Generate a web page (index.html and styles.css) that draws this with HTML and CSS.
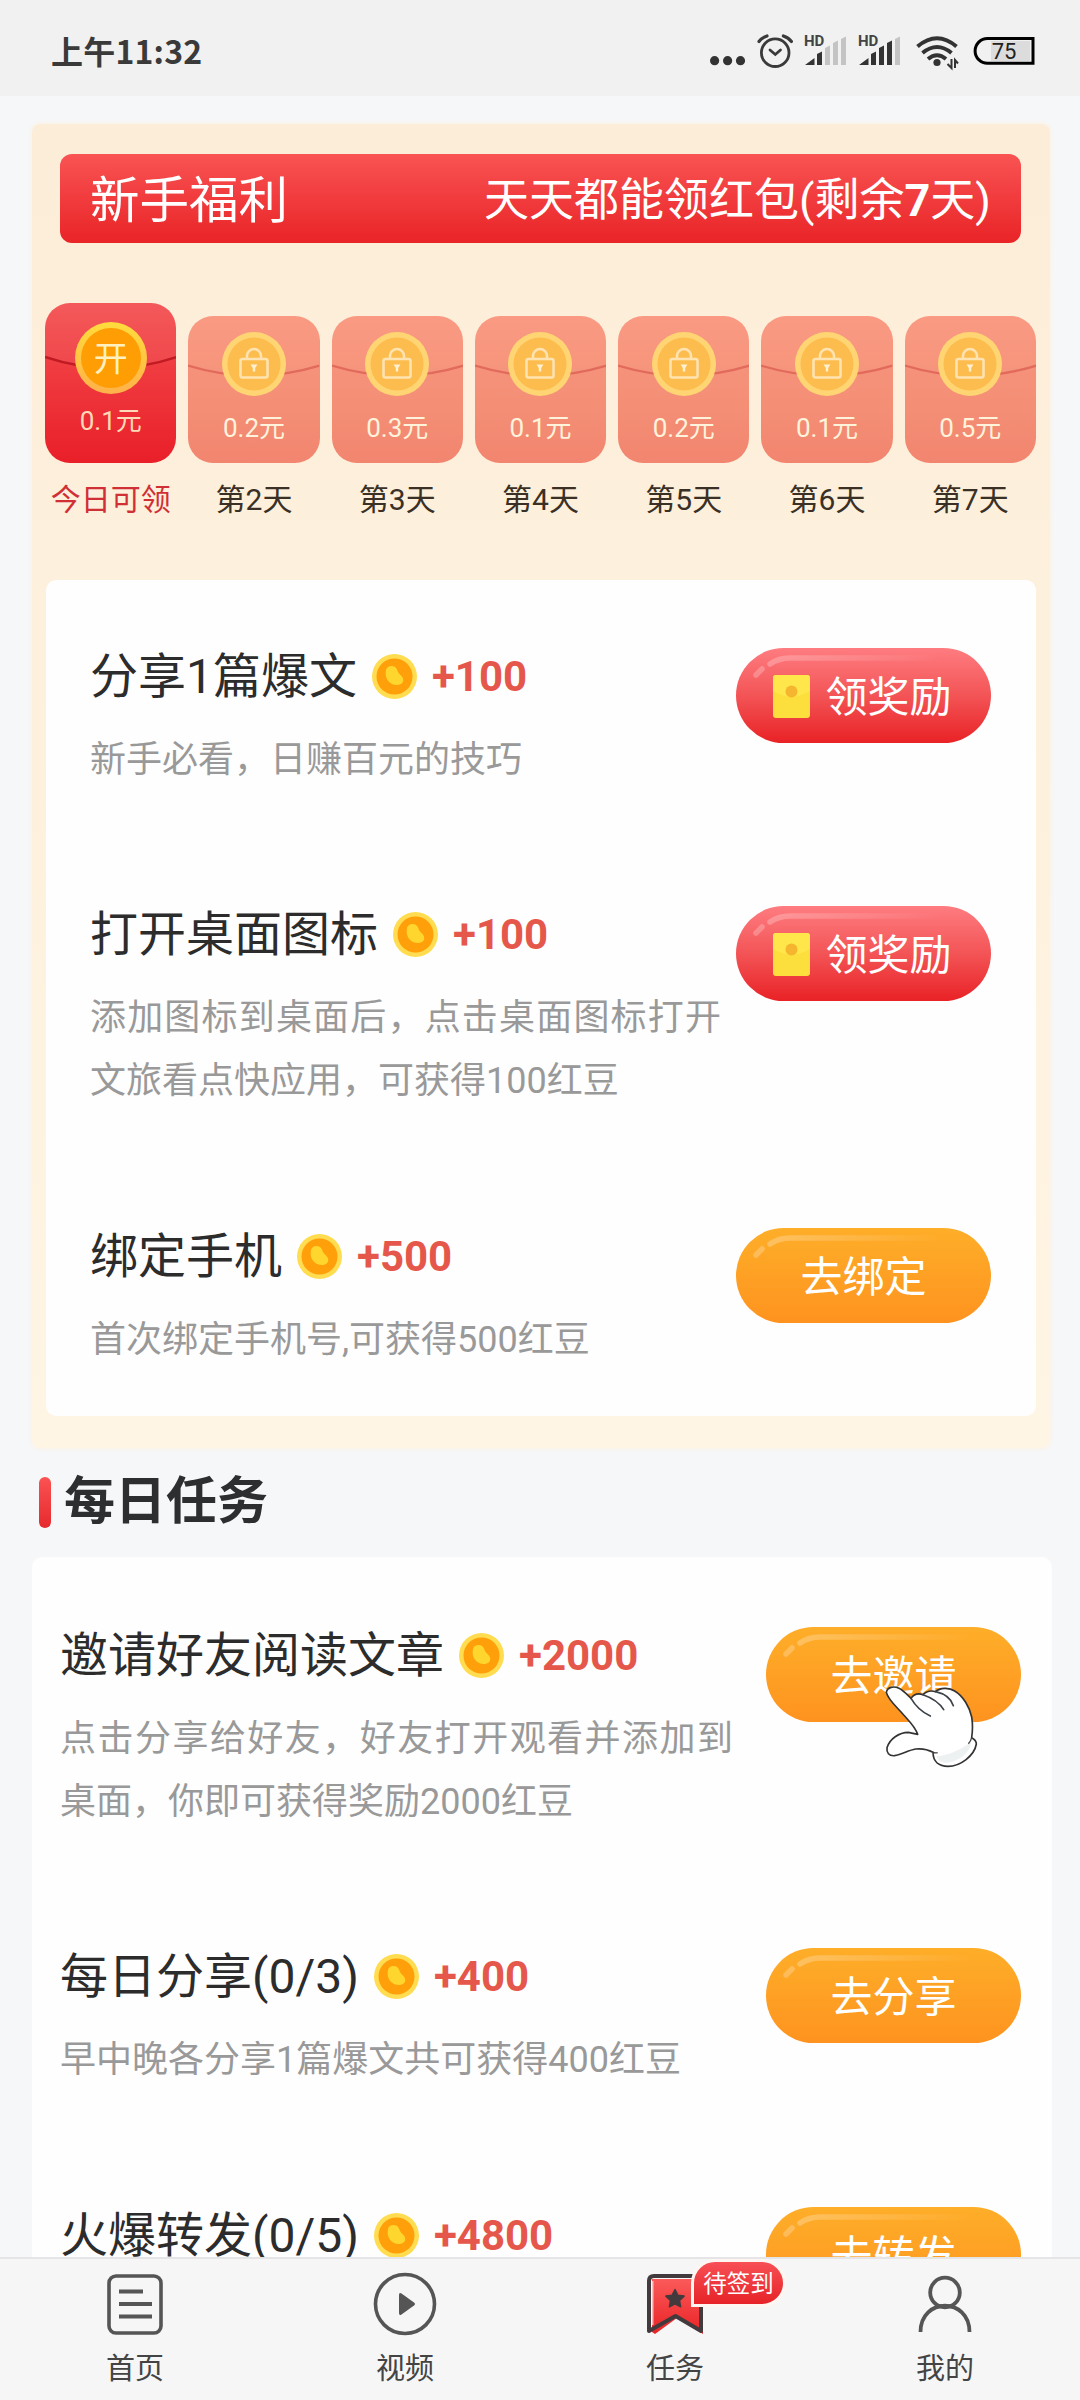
FILE: index.html
```html
<!DOCTYPE html>
<html lang="zh-CN">
<head>
<meta charset="utf-8">
<title>任务</title>
<link rel="stylesheet" href="styles.css">
</head>
<body>
<svg class="defs" width="0" height="0" aria-hidden="true">
  <defs>
    <linearGradient id="gloss-fade" x1="0" x2="1" y1="0" y2="0">
      <stop offset="0" stop-color="#fff" stop-opacity=".26"/>
      <stop offset="1" stop-color="#fff" stop-opacity="0"/>
    </linearGradient>
    <linearGradient id="ring" x1="0" x2="0" y1="0" y2="1">
      <stop offset="0" stop-color="#ffdc3c"/><stop offset="1" stop-color="#ffb14a"/>
    </linearGradient>
    <linearGradient id="ribbon" x1="0" x2="0" y1="0" y2="1">
      <stop offset="0" stop-color="#fb5a5a"/><stop offset="1" stop-color="#ea2326"/>
    </linearGradient>
    <symbol id="gloss" viewBox="0 0 255 96">
      <path d="M34 16Q43 10 54 10H205" fill="none" stroke="url(#gloss-fade)" stroke-width="5.500" stroke-linecap="round"/>
      <path d="M20 27l6-6" stroke="#fff" stroke-opacity=".24" stroke-width="5.500" stroke-linecap="round"/>
    </symbol>
    <symbol id="bean" viewBox="0 0 45 45">
      <circle cx="22.5" cy="22.5" r="22.5" fill="#ffdc50"/>
      <circle cx="22.5" cy="22.5" r="18" fill="#ff9f0a"/>
      <path d="M14 16c1-5 9-5.500 11-.5 1 3 2 4 4 6 4 4 2.500 9-3 9.500-8 .5-14-6-12-15z" fill="#ffd62e"/>
    </symbol>
    <symbol id="flap" viewBox="0 0 132 160" preserveAspectRatio="none">
      <path d="M0 0H132V53Q66 75 0 53Z" fill="#fff" fill-opacity=".06"/>
      <path d="M0 54Q66 76 132 54" fill="none" stroke="#b00f18" stroke-opacity=".75" stroke-width="2.4"/>
    </symbol>
    <symbol id="coin" viewBox="0 0 72 72">
      <circle cx="36" cy="36" r="36" fill="url(#ring)"/>
      <circle cx="36" cy="36" r="30" fill="#ff9d05"/>
    </symbol>
    <symbol id="lock" viewBox="0 0 64 64">
      <circle cx="32" cy="32" r="32" fill="#ffd573"/>
      <circle cx="32" cy="32" r="26.5" fill="#fdbc4e"/>
      <g fill="none" stroke="#ffe3b0" stroke-width="2.6">
        <rect x="18.5" y="27" width="27" height="18.5" rx="2"/>
        <path d="M25 27v-3a7 7 0 0 1 14 0v3"/>
      </g>
      <path d="M28.500 32.500h7l-2.300 3.500v3.500h-2.400v-3.500z" fill="#fff0d0"/>
    </symbol>
    <symbol id="envelope" viewBox="0 0 37 43">
      <rect width="37" height="43" rx="3" fill="#fcdf3c"/>
      <path d="M0 16Q18.500 27 37 16V3a3 3 0 0 0-3-3H3a3 3 0 0 0-3 3z" fill="#ffe64a"/>
      <circle cx="18.500" cy="16.500" r="6" fill="#f5b52f"/>
    </symbol>
  </defs>
</svg>

<header class="status">
  <span class="clock">上午11:32</span>
  <svg class="status-icons" viewBox="5 28 332 44" width="332" height="44">
    <g fill="#333"><circle cx="14.600" cy="60.700" r="4.600"/><circle cx="27.600" cy="60.700" r="4.600"/><circle cx="40.500" cy="60.700" r="4.600"/></g>
    <g fill="none" stroke="#3a3a3a" stroke-width="2.800" stroke-linecap="round">
      <circle cx="75.200" cy="52.700" r="13.800"/>
      <path d="M70 50l5.300 4.500L80.500 50"/>
      <path d="M59 41.500q3-4 8-5.500M91.400 41.500q-3-4-8-5.500" stroke-width="3.200"/>
    </g>
    <g class="hd"><text x="104" y="46">HD</text><text x="158" y="46">HD</text></g>
    <g fill="#333">
      <path d="M105 65l9.500-7v7zM117 65V54l5-2.500V65z"/>
      <path d="M159 65l9.500-7v7zM171 65V54l5-2.500V65zM179 65V48l5-2.500V65zM187 65V43l5-2.500V65z"/>
    </g>
    <g fill="#c4c4c4">
      <path d="M125 65V48l5-2.500V65zM133 65V43l5-2.500V65zM141 65V39l5-2.500V65zM195 65V39l5-2.500V65z"/>
    </g>
    <g fill="none" stroke="#333" stroke-width="4">
      <path d="M217.500 46.500Q237 30 256.500 46.500M222.500 53Q237 41 251.500 53M228 59Q237 51.500 246 59"/>
    </g>
    <circle cx="237" cy="62.500" r="3.600" fill="#333"/>
    <path d="M251.500 59v9l-4-4M255 68v-8l3 3.500" fill="none" stroke="#333" stroke-width="2"/>
    <rect x="291" y="41" width="39" height="20" fill="#dcdcdc"/>
    <path d="M333 38.500H287.500a12.300 12.300 0 0 0 0 24.800H333z" fill="none" stroke="#000" stroke-width="3"/>
    <text class="charge" x="304" y="59" text-anchor="middle">75</text>
  </svg>
</header>

<main class="page">
  <section class="newbie">
    <div class="banner">
      <h1 class="banner-title">新手福利</h1>
      <p class="banner-note">天天都能领红包(剩余<b>7</b>天)</p>
    </div>

    <ul class="days">
      <li class="day today">
        <div class="packet"><svg class="flap"><use href="#flap"/></svg><div class="coin"><svg class="coin-art"><use href="#coin"/></svg><span class="open">开</span></div><span class="sum">0.1元</span></div>
        <span class="when">今日可领</span>
      </li>
      <li class="day"><div class="packet"><svg class="flap"><use href="#flap"/></svg><svg class="coin"><use href="#lock"/></svg><span class="sum">0.2元</span></div><span class="when">第2天</span></li>
      <li class="day"><div class="packet"><svg class="flap"><use href="#flap"/></svg><svg class="coin"><use href="#lock"/></svg><span class="sum">0.3元</span></div><span class="when">第3天</span></li>
      <li class="day"><div class="packet"><svg class="flap"><use href="#flap"/></svg><svg class="coin"><use href="#lock"/></svg><span class="sum">0.1元</span></div><span class="when">第4天</span></li>
      <li class="day"><div class="packet"><svg class="flap"><use href="#flap"/></svg><svg class="coin"><use href="#lock"/></svg><span class="sum">0.2元</span></div><span class="when">第5天</span></li>
      <li class="day"><div class="packet"><svg class="flap"><use href="#flap"/></svg><svg class="coin"><use href="#lock"/></svg><span class="sum">0.1元</span></div><span class="when">第6天</span></li>
      <li class="day"><div class="packet"><svg class="flap"><use href="#flap"/></svg><svg class="coin"><use href="#lock"/></svg><span class="sum">0.5元</span></div><span class="when">第7天</span></li>
    </ul>

    <div class="tasks newbie-tasks">
      <article class="task">
        <div class="info">
          <h2 class="name">分享1篇爆文<svg class="bean"><use href="#bean"/></svg><span class="gain">+100</span></h2>
          <p class="desc">新手必看，日赚百元的技巧</p>
        </div>
        <button class="btn red"><svg class="gloss"><use href="#gloss"/></svg><svg class="envelope"><use href="#envelope"/></svg>领奖励</button>
      </article>
      <article class="task">
        <div class="info">
          <h2 class="name">打开桌面图标<svg class="bean"><use href="#bean"/></svg><span class="gain">+100</span></h2>
          <p class="desc">添加图标到桌面后，点击桌面图标打开文旅看点快应用，可获得100红豆</p>
        </div>
        <button class="btn red"><svg class="gloss"><use href="#gloss"/></svg><svg class="envelope"><use href="#envelope"/></svg>领奖励</button>
      </article>
      <article class="task">
        <div class="info">
          <h2 class="name">绑定手机<svg class="bean"><use href="#bean"/></svg><span class="gain">+500</span></h2>
          <p class="desc">首次绑定手机号,可获得500红豆</p>
        </div>
        <button class="btn"><svg class="gloss"><use href="#gloss"/></svg>去绑定</button>
      </article>
    </div>
  </section>

  <h2 class="section-title">每日任务</h2>

  <section class="tasks daily-tasks">
    <article class="task">
      <div class="info">
        <h2 class="name">邀请好友阅读文章<svg class="bean"><use href="#bean"/></svg><span class="gain">+2000</span></h2>
        <p class="desc">点击分享给好友，好友打开观看并添加到桌面，你即可获得奖励2000红豆</p>
      </div>
      <button class="btn"><svg class="gloss"><use href="#gloss"/></svg>去邀请
        <svg class="hand" viewBox="430 310 290 260">
          <path d="M440 338C443 322 462 318 478 326C492 333 503 346 514 356C522 344 536 340 550 345C560 334 576 332 588 336C600 324 628 322 645 334C672 350 690 384 696 412C699 430 700 446 696 474C704 478 710 484 710 493C704 528 662 560 625 560C598 560 580 546 580 518C562 508 546 506 528 508C505 512 488 524 464 528C448 529 440 520 442 504C450 478 478 458 506 458L534 464C526 440 508 424 492 406C474 384 446 362 440 338Z" fill="#fff" stroke="#333" stroke-width="5" stroke-linejoin="round"/>
          <path d="M590 530C620 528 664 512 694 486C696 524 630 562 600 545Z" fill="#edf1f1"/>
          <path d="M514 356C528 380 548 398 572 409M550 345C576 354 600 370 612 390M588 336C614 342 634 356 641 378" fill="none" stroke="#3c4248" stroke-width="5" stroke-linecap="round"/>
          <path d="M580 518C584 520 588 520 594 519M696 474C694 482 690 488 686 492" fill="none" stroke="#444" stroke-width="4"/>
        </svg>
      </button>
    </article>
    <article class="task">
      <div class="info">
        <h2 class="name">每日分享(0/3)<svg class="bean"><use href="#bean"/></svg><span class="gain">+400</span></h2>
        <p class="desc">早中晚各分享1篇爆文共可获得400红豆</p>
      </div>
      <button class="btn"><svg class="gloss"><use href="#gloss"/></svg>去分享</button>
    </article>
    <article class="task">
      <div class="info">
        <h2 class="name">火爆转发(0/5)<svg class="bean"><use href="#bean"/></svg><span class="gain">+4800</span></h2>
      </div>
      <button class="btn"><svg class="gloss"><use href="#gloss"/></svg>去转发</button>
    </article>
  </section>
</main>

<nav class="tabs">
  <a class="tab">
    <svg class="tab-icon" viewBox="0 0 64 64"><g fill="none" stroke="#555" stroke-width="3.600"><rect x="6" y="4" width="52" height="57" rx="7"/><path d="M16 19.500h24M16 32h33M16 44.500h33" stroke-width="4"/></g></svg>
    <span>首页</span>
  </a>
  <a class="tab">
    <svg class="tab-icon" viewBox="0 0 64 64"><circle cx="32" cy="32" r="29.500" fill="none" stroke="#555" stroke-width="3.600"/><path d="M26 23q0-3 2.500-1.500L41 30.500q2 1.500 0 3L28.500 42.500Q26 44 26 41z" fill="#555"/></svg>
    <span>视频</span>
  </a>
  <a class="tab">
    <svg class="tab-icon" viewBox="0 0 64 64"><path d="M9 7H60V62L34 46 12 62 9 60Z" fill="url(#ribbon)"/><path d="M6 9q0-5 5-5H58V59L32.500 44 6 59Z" fill="none" stroke="#433a3e" stroke-width="4" stroke-linejoin="round"/><path d="M9.500 9V53" stroke="#fff" stroke-opacity=".65" stroke-width="2"/><path d="M32 15.500l2.800 5.700 6.300.9-4.600 4.400 1.100 6.300-5.600-3-5.600 3 1.100-6.300-4.600-4.400 6.300-.9z" transform="translate(0 2)" fill="#433a3e" stroke="#433a3e" stroke-width="1.500" stroke-linejoin="round"/></svg>
    <span>任务</span>
    <em class="badge">待签到</em>
  </a>
  <a class="tab">
    <svg class="tab-icon" viewBox="0 0 64 64"><g fill="none" stroke="#555" stroke-width="3.800"><circle cx="32" cy="20.500" r="14.800"/><path d="M7.500 60C7.500 25 56.500 25 56.500 60"/></g></svg>
    <span>我的</span>
  </a>
</nav>
</body>
</html>
```
FILE: styles.css
```css
* { box-sizing: border-box; margin: 0; padding: 0; }

body {
  width: 1080px;
  height: 2400px;
  display: flex;
  flex-direction: column;
  overflow: hidden;
  background: #f6f7f9;
  color: #2c2c2c;
  font-family: Roboto, "Noto Sans CJK SC", sans-serif;
}

.defs { position: absolute; }

/* status bar */
.status {
  flex: none;
  height: 96px;
  padding: 28px 43px 0 51px;
  display: flex;
  justify-content: space-between;
  background: #f1f1f1;
}
.clock {
  font: 600 32px/45px "Noto Sans CJK SC", sans-serif;
  color: #3a3a3a;
  letter-spacing: .2px;
}
.status-icons { flex: none; }
.hd text { font: 700 15px Roboto, sans-serif; fill: #444; }
.charge { font: 400 22px Roboto, sans-serif; fill: #222; }

.page { flex: 1; min-height: 0; overflow: hidden; padding: 28px 28px 0 32px; }

/* newcomer card */
.newbie {
  height: 1324px;
  margin-right: 2px;
  padding: 30px 14px 32px;
  border-radius: 8px;
  background: linear-gradient(#fcedd8, #fdf0dc 35%, #fff5e4);
  box-shadow: 0 0 5px #fdf0dc;
}
.banner {
  height: 89px;
  margin: 0 15px 0 14px;
  padding: 5px 30px 0;
  display: flex;
  align-items: center;
  justify-content: space-between;
  border-radius: 12px;
  background: linear-gradient(#f95353, #e92427);
  color: #fff;
}
.banner-title { font-size: 49.500px; font-weight: 400; line-height: 84px; }
.banner-note { font-size: 45px; line-height: 84px; }

.days {
  height: 277px;
  margin: 60px 0 0 -1px;
  display: grid;
  grid-template-columns: repeat(7, 1fr);
  column-gap: 11.800px;
  list-style: none;
}
.day { display: flex; flex-direction: column; align-items: center; padding-top: 13px; }
.today { padding-top: 0; }
.packet {
  position: relative;
  width: 100%;
  height: 147px;
  padding-top: 16px;
  display: flex;
  flex-direction: column;
  align-items: center;
  overflow: hidden;
  border-radius: 25px;
  background: linear-gradient(#fa9880, #f48f76 60%, #f2856f);
  color: #fff3dc;
}
.flap { position: absolute; inset: 0; width: 100%; height: 100%; opacity: .4; }
.coin { position: relative; width: 64px; height: 64px; flex: none; }
.sum { position: relative; margin-top: 17px; font-size: 26px; line-height: 30px; }
.when { margin-top: 21px; font-size: 30px; line-height: 32px; color: #3a3025; white-space: nowrap; }

.today .packet { height: 160px; padding-top: 19px; background: linear-gradient(#f44f50, #e91f29); color: #ffd9b8; }
.today .flap { opacity: 1; }
.today .coin { width: 72px; height: 72px; display: grid; place-items: center; }
.today .when { color: #cf2f35; }
.today .sum { margin-top: 12px; }
.coin-art { position: absolute; inset: 0; width: 100%; height: 100%; }
.open { position: relative; padding-top: 3px; font-size: 34px; line-height: 69px; color: #fff0c0; }

/* task lists */
.tasks { background: #fefefe; border-radius: 10px; }
.newbie-tasks { height: 836px; padding: 68px 45px 0 44px; }
.daily-tasks { padding: 70px 31px 0 28px; }

.task { display: flex; justify-content: space-between; margin-bottom: 116.300px; }
.info { width: 631px; }
.daily-tasks .info { width: 673px; }
.name {
  display: flex;
  align-items: center;
  padding-top: 2px;
  font-size: 48px;
  font-weight: 400;
  line-height: 53px;
  white-space: nowrap;
}
.bean { width: 45px; height: 45px; margin: 0 15px; flex: none; }
.gain { font-size: 42px; font-weight: 700; color: #e5574b; }
.desc { margin-top: 26px; margin-bottom: -2px; font-size: 36px; line-height: 63px; color: #999; text-align: justify; }

.btn {
  position: relative;
  flex: none;
  width: 255px;
  height: 95px;
  padding-top: 4px;
  display: flex;
  align-items: center;
  justify-content: center;
  gap: 15px;
  border: 0;
  border-radius: 48px;
  background: linear-gradient(#feae29, #fe931f);
  color: #fff;
  font: 400 42px/91px Roboto, "Noto Sans CJK SC", sans-serif;
}
.red { padding-right: 2px; background: linear-gradient(#fe7c80, #f35456 50%, #e92226); }
.gloss { position: absolute; inset: 0; width: 255px; height: 96px; }
.envelope { width: 37px; height: 43px; margin-top: -3px; }
.hand { position: absolute; left: 117.300px; top: 56.300px; width: 96.700px; height: 86.700px; }

.section-title {
  height: 109px;
  margin-left: 7px;
  padding-bottom: 1px;
  display: flex;
  align-items: center;
  gap: 13px;
  font-size: 51px;
  font-weight: 700;
  line-height: 60px;
  color: #2d2e30;
}
.section-title::before {
  content: "";
  width: 12px;
  height: 51px;
  border-radius: 6px;
  background: linear-gradient(#fb5252, #e62a2e);
}

/* bottom navigation */
.tabs {
  flex: none;
  height: 143px;
  display: grid;
  grid-template-columns: repeat(4, 1fr);
  border-top: 2px solid #e5e5e8;
  background: #f6f6f7;
}
.tab {
  position: relative;
  padding-top: 13px;
  display: flex;
  flex-direction: column;
  align-items: center;
  font-size: 29px;
  line-height: 36px;
  color: #444;
}
.tab-icon { width: 64px; height: 64px; margin-bottom: 15px; }
.badge {
  position: absolute;
  left: 151px;
  top: 0;
  width: 95px;
  height: 48px;
  padding-top: 1px;
  border: 3px solid #fff6f2;
  border-radius: 24px 24px 24px 0;
  background: linear-gradient(#f75055, #e62328);
  color: #fff;
  font-size: 23.500px;
  font-style: normal;
  line-height: 42px;
  text-align: center;
}
```
